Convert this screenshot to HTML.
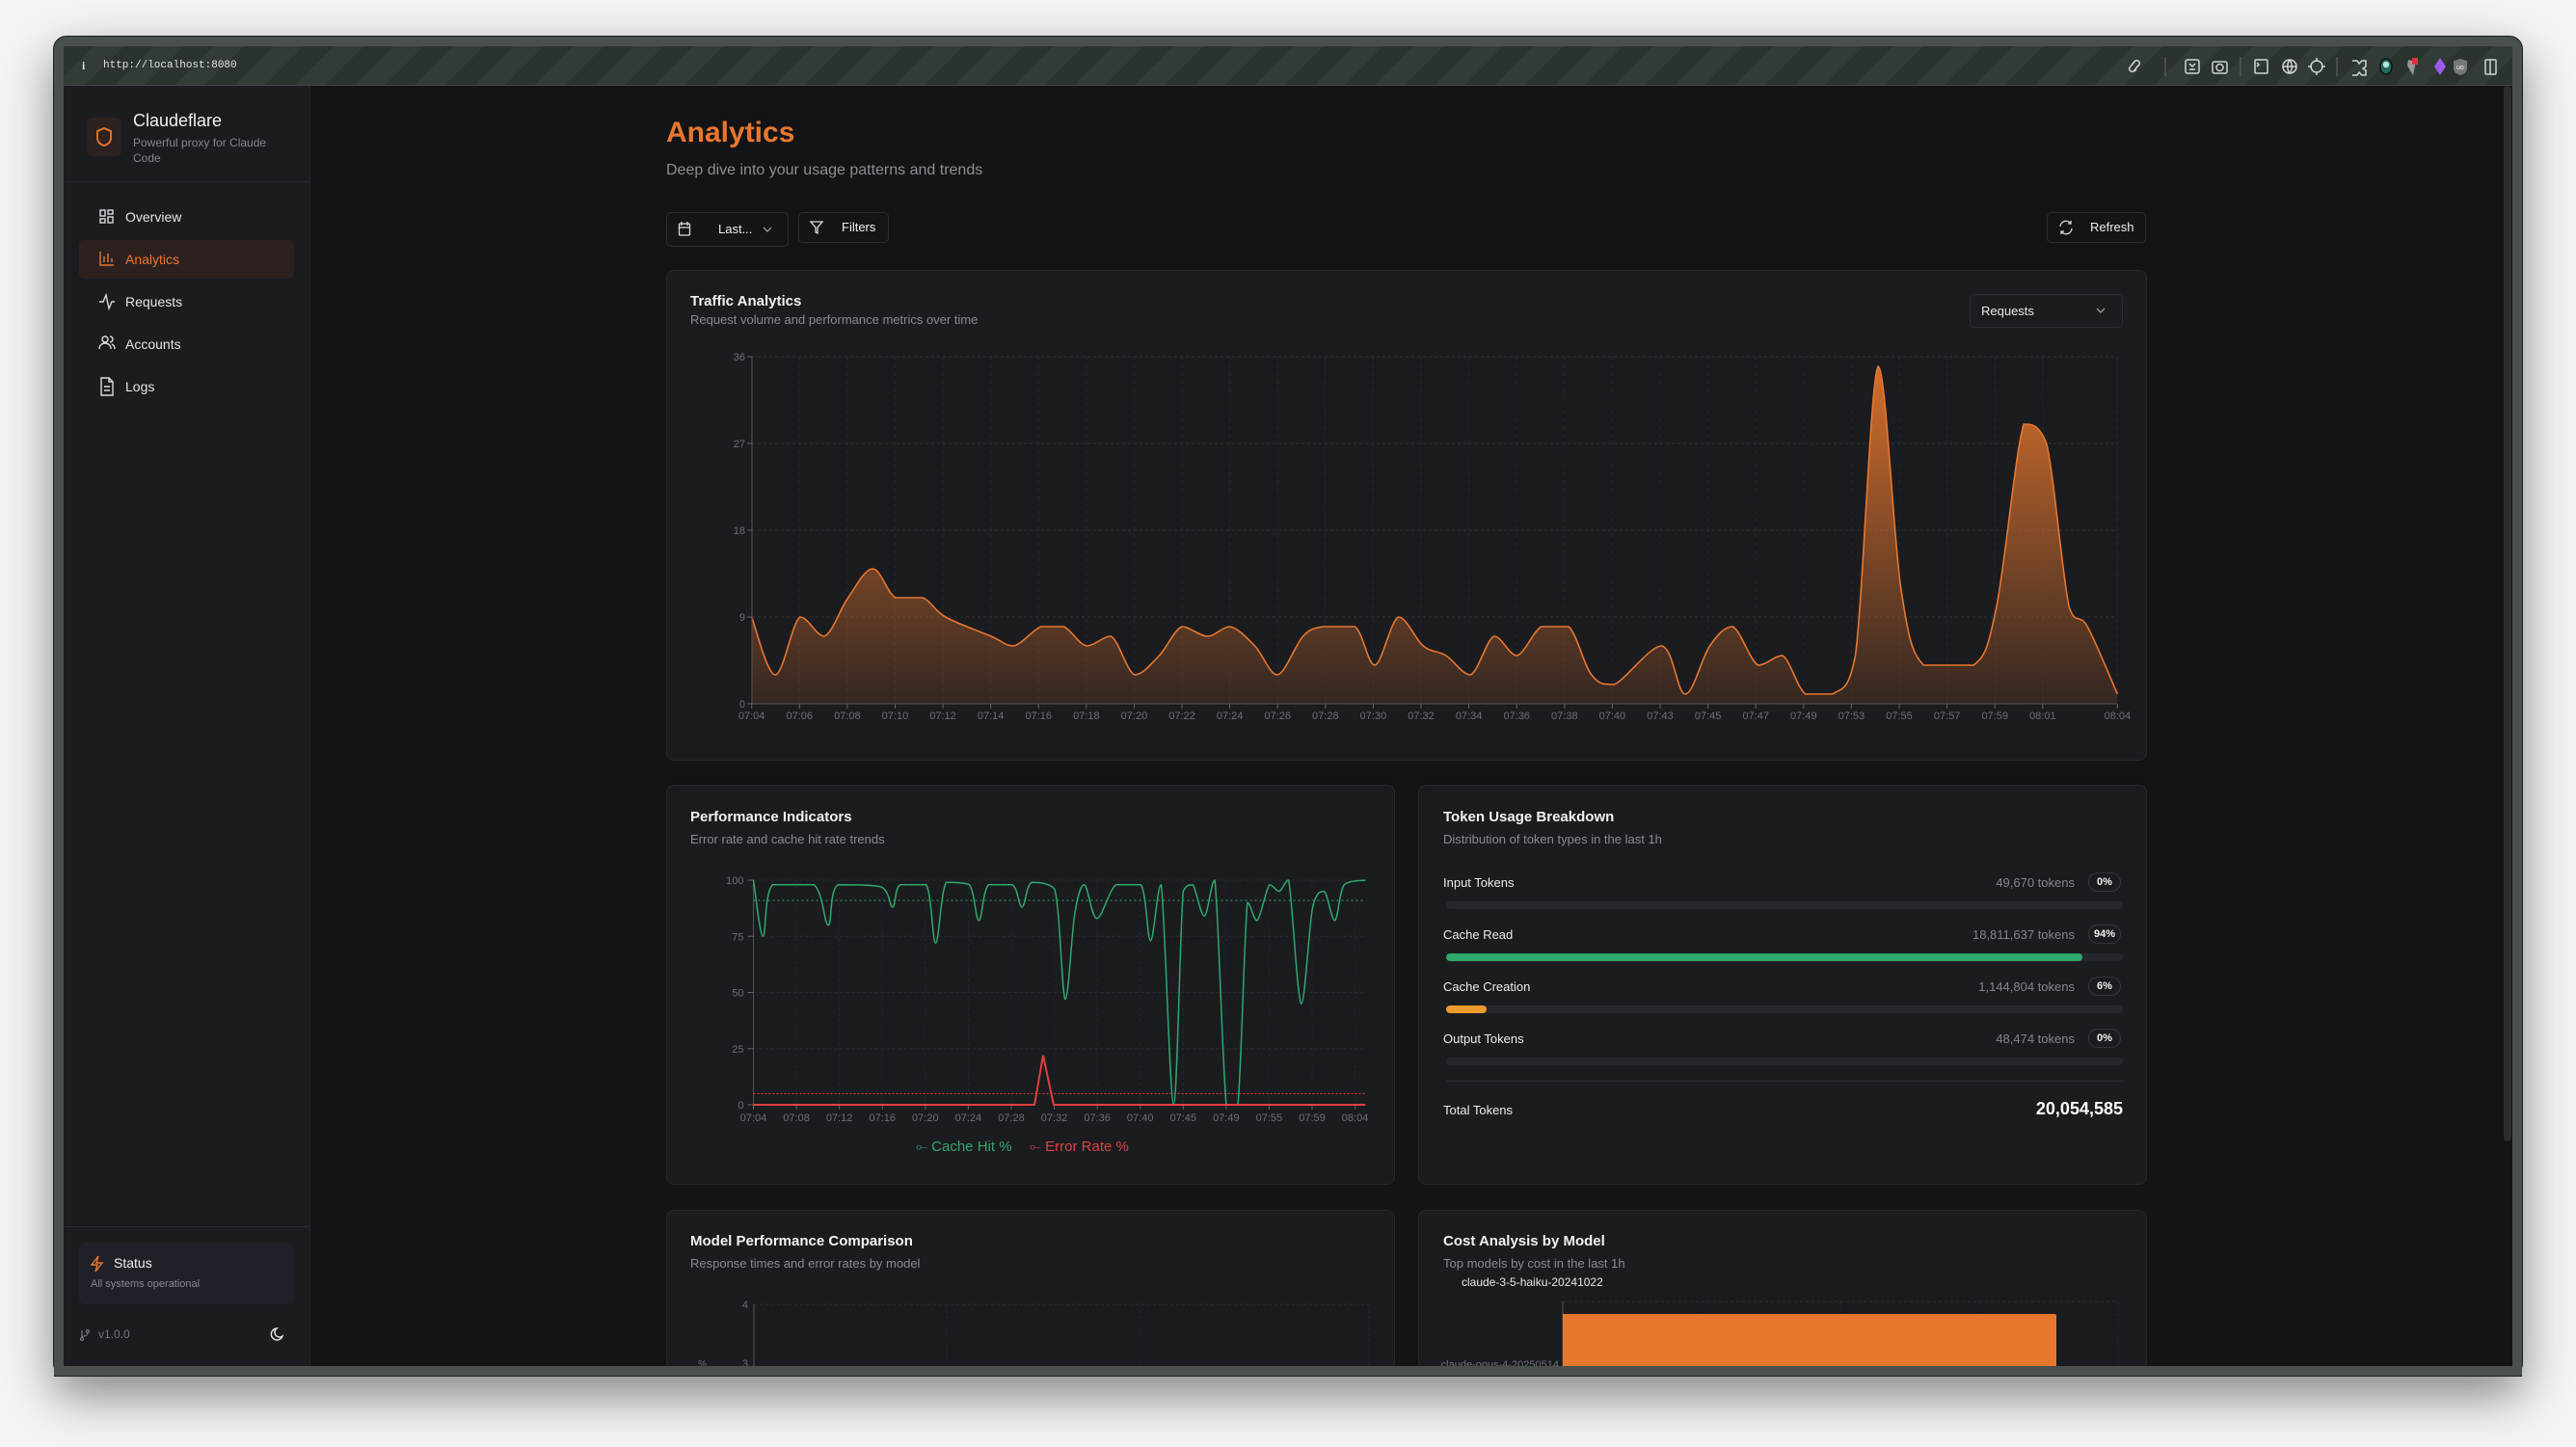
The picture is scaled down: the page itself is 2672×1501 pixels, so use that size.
<!DOCTYPE html>
<html><head><meta charset="utf-8"><style>
*{box-sizing:border-box;margin:0;padding:0}
body{width:2672px;height:1501px;background:#f4f4f4;font-family:"Liberation Sans",sans-serif;position:relative;overflow:hidden}
.abs{position:absolute}
#win{position:absolute;left:55px;top:37px;width:2562px;height:1391px;background:#4a514c;border:1px solid #1d1f1e;border-radius:14px;box-shadow:0 20px 50px rgba(0,0,0,.45);overflow:hidden}
#tb{position:absolute;left:66px;top:48px;width:2540px;height:41px;background:repeating-linear-gradient(135deg,#2b332e 0 22px,#323b35 22px 44px);border-bottom:1px solid #414842}
#side{position:absolute;left:66px;top:89px;width:256px;height:1328px;background:#1b1c20;border-right:1px solid #26272c}
#main{position:absolute;left:322px;top:89px;width:2284px;height:1328px;background:#131416}
.card{position:absolute;background:#1b1c20;border:1px solid #27282d;border-radius:8px}
.t{position:absolute;white-space:nowrap}
.nav{position:absolute;left:130px;font-size:14px;color:#e6e6e8}
.btn{position:absolute;border:1px solid #2c2d33;border-radius:5px;background:#141518;color:#e8e8ea;font-size:13px}
.ct{font-size:15px;color:#f2f2f4;font-weight:bold}
.cs{font-size:13px;color:#8a8b92}
.lbl{font-size:13px;color:#ececee}
.tk{font-size:13px;color:#85868c}
.bar{position:absolute;left:1500px;width:702px;height:8px;background:#26272d;border-radius:4px}
.badge{position:absolute;left:2166px;width:34px;height:20px;border:1px solid #34353b;border-radius:10px;font-size:11px;color:#f2f2f2;font-weight:bold;text-align:center;line-height:18px}
svg text{font-family:"Liberation Sans",sans-serif}
#c1,#c2{z-index:2}
</style></head><body>
<div id="win"></div>
<div id="tb"></div>
<div class="t" style="left:85px;top:61px;font-size:12px;color:#ddd;font-weight:bold;font-family:'Liberation Serif',serif">i</div>
<div class="t" style="left:107px;top:62px;font-size:11px;color:#e4e4e4;font-family:'Liberation Mono',monospace">http://localhost:8080</div>
<svg class="abs" style="left:2200px;top:56px" width="410" height="26" viewBox="0 0 410 26" fill="none" stroke="#d0d4d0" stroke-width="1.5">
<path d="M14 8l-5 6a3 3 0 0 0 4 4l5-6M16 16l-2 2"/><path d="M12 10l3-3a3 3 0 0 1 4 4l-3 3"/>
<line x1="46" y1="3" x2="46" y2="23" stroke="#555"/>
<rect x="67" y="6" width="14" height="14" rx="2"/><path d="M71 10l3 3 3-3M71 16h6"/>
<rect x="95" y="8" width="15" height="12" rx="2"/><circle cx="102.5" cy="14" r="3.5"/>
<line x1="124" y1="3" x2="124" y2="23" stroke="#555"/>
<rect x="139" y="6" width="13" height="14" rx="1"/><path d="M141 9l2 2-2 2"/>
<circle cx="175" cy="13" r="7"/><path d="M168 13h14M175 6c-3 4-3 10 0 14M175 6c3 4 3 10 0 14"/>
<circle cx="203" cy="13" r="6"/><path d="M203 4v4M203 18v4M194 13h4M208 13h4"/>
<line x1="224" y1="3" x2="224" y2="23" stroke="#555"/>
<path d="M240 7h5l2 3 3-3h4v6l-3 2 3 2v5h-4l-3-3-2 3h-5"/>
<ellipse cx="275" cy="13" rx="6" ry="8" fill="#1d6b60" stroke="#111"/><circle cx="275" cy="11" r="2.5" fill="#8fe"/>
<path d="M298 6l8 2-3 14-6-10z" fill="#999" stroke="none"/><rect x="302" y="4" width="6" height="7" fill="#e23040" stroke="none"/>
<path d="M331 4l6 9-6 9-6-9z" fill="#9a5cf0" stroke="none"/>
<path d="M352 5l7 2v8c0 4-3 6-7 7-4-1-7-3-7-7V7z" fill="#777" stroke="none"/><text x="348" y="16" font-size="7" fill="#eee" stroke="none">uo</text>
<rect x="378" y="6" width="11" height="15" rx="1"/><line x1="383" y1="6" x2="383" y2="21"/>
</svg>

<div id="side"></div>
<div class="abs" style="left:90px;top:122px;width:36px;height:40px;background:#2d2220;border-radius:6px"></div>
<svg class="abs" style="left:99px;top:131px" width="18" height="22" viewBox="0 0 18 22" fill="none" stroke="#e8772e" stroke-width="1.8"><path d="M9 2l7 3v7c0 4-3 7-7 8-4-1-7-4-7-8V5z"/></svg>
<div class="t" style="left:138px;top:115px;font-size:18px;color:#f2f2f4">Claudeflare</div>
<div class="t" style="left:138px;top:140px;font-size:12px;color:#85868c;line-height:16px;white-space:normal;width:160px">Powerful proxy for Claude Code</div>
<div class="abs" style="left:66px;top:188px;width:256px;height:1px;background:#2a2b30"></div>
<div class="abs" style="left:82px;top:249px;width:223px;height:40px;background:#2d2120;border-radius:5px"></div>
<svg class="abs" style="left:102px;top:216px" width="18" height="200" viewBox="0 0 18 200" fill="none" stroke="#dcdce0" stroke-width="1.4">
<rect x="2" y="2" width="5" height="6"/><rect x="10" y="2" width="5" height="4"/><rect x="2" y="11" width="5" height="4"/><rect x="10" y="9" width="5" height="6"/>
<g stroke="#e8772e"><path d="M2 45v14h14M6 56v-6M10 56v-9M14 56v-4"/></g>
<path d="M1 97h4l3-7 3 14 3-7h3"/>
<circle cx="7" cy="136" r="3"/><path d="M1 146c0-4 3-6 6-6s6 2 6 6M12 133a3 3 0 0 1 0 6M14 141c2 1 3 3 3 5"/>
<path d="M3 176h8l4 4v14H3z M11 176v4h4 M6 185h6M6 189h6"/>
</svg>
<div class="nav" style="top:217px">Overview</div>
<div class="nav" style="top:261px;color:#e8772e">Analytics</div>
<div class="nav" style="top:305px">Requests</div>
<div class="nav" style="top:349px">Accounts</div>
<div class="nav" style="top:393px">Logs</div>

<div class="abs" style="left:66px;top:1272px;width:256px;height:1px;background:#2a2b30"></div>
<div class="abs" style="left:82px;top:1289px;width:223px;height:64px;background:#202128;border-radius:6px"></div>
<svg class="abs" style="left:93px;top:1302px" width="16" height="18" viewBox="0 0 16 18" fill="none" stroke="#e8772e" stroke-width="1.4"><path d="M9 1L2 10h6l-2 7 7-9H7z"/></svg>
<div class="t" style="left:118px;top:1302px;font-size:14px;color:#f0f0f2">Status</div>
<div class="t" style="left:94px;top:1326px;font-size:11px;color:#8a8b92">All systems operational</div>
<svg class="abs" style="left:82px;top:1378px" width="12" height="14" viewBox="0 0 12 14" fill="none" stroke="#77787e" stroke-width="1.2"><circle cx="3" cy="11" r="1.5"/><circle cx="9" cy="3" r="1.5"/><path d="M3 2v7M9 5c0 3-6 3-6 4"/></svg>
<div class="t" style="left:102px;top:1377px;font-size:12px;color:#77787e">v1.0.0</div>
<svg class="abs" style="left:279px;top:1376px" width="16" height="16" viewBox="0 0 16 16" fill="none" stroke="#e6e6e6" stroke-width="1.4"><path d="M8 2a6 6 0 1 0 6 8A5 5 0 0 1 8 2z"/></svg>

<div id="main"></div>
<div class="abs" style="left:2597px;top:89px;width:8px;height:1095px;background:#2a2c2f;border-radius:4px"></div>
<div class="t" style="left:691px;top:121px;font-size:30px;color:#e8772e;font-weight:bold">Analytics</div>
<div class="t" style="left:691px;top:168px;font-size:16px;color:#8d8e95">Deep dive into your usage patterns and trends</div>

<div class="btn" style="left:691px;top:220px;width:127px;height:36px"></div>
<svg class="abs" style="left:703px;top:229px" width="14" height="16" viewBox="0 0 14 16" fill="none" stroke="#ddd" stroke-width="1.3"><rect x="1.5" y="3" width="11" height="12" rx="1"/><path d="M1.5 7h11M4 1v4M10 1v4"/></svg>
<div class="t" style="left:745px;top:230px;font-size:13px;color:#eee">Last...</div>
<svg class="abs" style="left:791px;top:234px" width="10" height="8" viewBox="0 0 10 8" fill="none" stroke="#aaa" stroke-width="1.2"><path d="M1 2l4 4 4-4"/></svg>
<div class="btn" style="left:828px;top:220px;width:94px;height:32px"></div>
<svg class="abs" style="left:840px;top:228px" width="14" height="16" viewBox="0 0 14 16" fill="none" stroke="#ddd" stroke-width="1.3"><path d="M1 2h12L8 8v6L6 13V8z"/></svg>
<div class="t" style="left:873px;top:228px;font-size:13px;color:#eee">Filters</div>
<div class="btn" style="left:2123px;top:220px;width:103px;height:32px"></div>
<svg class="abs" style="left:2135px;top:228px" width="16" height="16" viewBox="0 0 16 16" fill="none" stroke="#ddd" stroke-width="1.3"><path d="M2 7a6 6 0 0 1 11-3M14 9a6 6 0 0 1-11 3M13 1v3h-3M3 15v-3h3"/></svg>
<div class="t" style="left:2168px;top:228px;font-size:13px;color:#eee">Refresh</div>

<div class="card" style="left:691px;top:280px;width:1536px;height:509px"></div>
<div class="t ct" style="left:716px;top:304px">Traffic Analytics</div>
<div class="t cs" style="left:716px;top:324px">Request volume and performance metrics over time</div>
<div class="btn" style="left:2043px;top:305px;width:159px;height:35px;background:#1b1c20"></div>
<div class="t" style="left:2055px;top:315px;font-size:13px;color:#e8e8ea">Requests</div>
<svg class="abs" style="left:2174px;top:318px" width="10" height="8" viewBox="0 0 10 8" fill="none" stroke="#aaa" stroke-width="1.2"><path d="M1 2l4 4 4-4"/></svg>

<div class="card" style="left:691px;top:814px;width:756px;height:415px"></div>
<div class="t ct" style="left:716px;top:839px">Performance Indicators</div>
<div class="t cs" style="left:716px;top:863px">Error rate and cache hit rate trends</div>

<div class="card" style="left:1471px;top:814px;width:756px;height:415px"></div>
<div class="t ct" style="left:1497px;top:839px">Token Usage Breakdown</div>
<div class="t cs" style="left:1497px;top:863px">Distribution of token types in the last 1h</div>
<div class="t lbl" style="left:1497px;top:908px">Input Tokens</div>
<div class="t tk" style="right:520px;top:908px">49,670 tokens</div><div class="badge" style="top:905px">0%</div>
<div class="bar" style="top:935px"></div>
<div class="t lbl" style="left:1497px;top:962px">Cache Read</div>
<div class="t tk" style="right:520px;top:962px">18,811,637 tokens</div><div class="badge" style="top:959px">94%</div>
<div class="bar" style="top:989px"></div><div class="bar" style="top:989px;width:660px;background:#2fa96a"></div>
<div class="t lbl" style="left:1497px;top:1016px">Cache Creation</div>
<div class="t tk" style="right:520px;top:1016px">1,144,804 tokens</div><div class="badge" style="top:1013px">6%</div>
<div class="bar" style="top:1043px"></div><div class="bar" style="top:1043px;width:42px;background:#ee9a2c"></div>
<div class="t lbl" style="left:1497px;top:1070px">Output Tokens</div>
<div class="t tk" style="right:520px;top:1070px">48,474 tokens</div><div class="badge" style="top:1067px">0%</div>
<div class="bar" style="top:1097px"></div>
<div class="abs" style="left:1500px;top:1121px;width:702px;height:1px;background:#2c2d33"></div>
<div class="t lbl" style="left:1497px;top:1144px">Total Tokens</div>
<div class="t" style="right:470px;top:1140px;font-size:18px;color:#fff;font-weight:bold">20,054,585</div>

<div class="card" style="left:691px;top:1255px;width:756px;height:170px"></div>
<div class="t ct" style="left:716px;top:1279px">Model Performance Comparison</div>
<div class="t cs" style="left:716px;top:1303px">Response times and error rates by model</div>
<div class="card" style="left:1471px;top:1255px;width:756px;height:170px"></div>
<div class="t ct" style="left:1497px;top:1279px">Cost Analysis by Model</div>
<div class="t cs" style="left:1497px;top:1303px">Top models by cost in the last 1h</div>
<div class="t" style="left:1516px;top:1323px;font-size:12px;color:#e8e8ea">claude-3-5-haiku-20241022</div>

<svg id="c1" class="abs" style="left:0;top:0" width="2672" height="1501"></svg>
<svg id="c2" class="abs" style="left:0;top:0" width="2672" height="1501"></svg>
<div class="abs" style="left:56px;top:1417px;width:2560px;height:11px;background:#4a514c;border-bottom:1px solid #222;z-index:3"></div>

<script>
function smooth(p,clamp){let d="M"+p[0][0]+" "+p[0][1];for(let i=0;i<p.length-1;i++){const p0=p[i-1]||p[i],p1=p[i],p2=p[i+1],p3=p[i+2]||p2;let c1x=p1[0]+(p2[0]-p0[0])/6,c1y=p1[1]+(p2[1]-p0[1])/6,c2x=p2[0]-(p3[0]-p1[0])/6,c2y=p2[1]-(p3[1]-p1[1])/6;if(clamp){const lo=Math.min(p1[1],p2[1]),hi=Math.max(p1[1],p2[1]);c1y=Math.max(lo,Math.min(hi,c1y));c2y=Math.max(lo,Math.min(hi,c2y));}d+=`C${c1x.toFixed(1)} ${c1y.toFixed(1)} ${c2x.toFixed(1)} ${c2y.toFixed(1)} ${p2[0].toFixed(1)} ${p2[1].toFixed(1)}`;}return d;}
const NS="http://www.w3.org/2000/svg";
function add(svg,tag,attrs,txt){const e=document.createElementNS(NS,tag);for(const k in attrs)e.setAttribute(k,attrs[k]);if(txt!=null)e.textContent=txt;svg.appendChild(e);return e;}
const s1=document.getElementById('c1');
const defs=add(s1,'defs',{});const g=add(defs,'linearGradient',{id:'og',x1:0,y1:0,x2:0,y2:1});add(g,'stop',{offset:'0','stop-color':'#e8772e','stop-opacity':'0.9'});add(g,'stop',{offset:'1','stop-color':'#e8772e','stop-opacity':'0.12'});
const X0=780,X1=2196,Y0=730;
[36,27,18,9].forEach(v=>{const y=Y0-v*10;add(s1,'line',{x1:X0,x2:X1,y1:y,y2:y,stroke:'#2e2f35','stroke-dasharray':'3 3'});});
const labs=["07:04","07:06","07:08","07:10","07:12","07:14","07:16","07:18","07:20","07:22","07:24","07:26","07:28","07:30","07:32","07:34","07:36","07:38","07:40","07:43","07:45","07:47","07:49","07:53","07:55","07:57","07:59","08:01","08:04"];
labs.forEach((l,i)=>{const zx=i<28?42+i*52.55:1543;const x=740+zx/1.0595;add(s1,'line',{x1:x,x2:x,y1:370,y2:730,stroke:'#26272d','stroke-dasharray':'4 4'});add(s1,'line',{x1:x,x2:x,y1:730,y2:735,stroke:'#666'});add(s1,'text',{x:x,y:746,'font-size':11,fill:'#6e6f76','text-anchor':'middle'},l);});
[[36,'36'],[27,'27'],[18,'18'],[9,'9'],[0,'0']].forEach(([v,t])=>{add(s1,'text',{x:773,y:Y0-v*10+4,'font-size':11,fill:'#6e6f76','text-anchor':'end'},t);add(s1,'line',{x1:775,x2:780,y1:Y0-v*10,y2:Y0-v*10,stroke:'#666'});});
const td=[[42,9],[68,3],[95,9],[122,7],[148,11],[175,14],[200,11],[230,11],[255,9],[305,7],[330,6],[360,8],[385,8],[410,6],[437,7],[463,3],[490,5],[515,8],[543,7],[568,8],[595,6],[620,3],[648,7],[670,8],[705,8],[727,4],[753,9],[780,6],[805,5],[832,3],[858,7],[883,5],[910,8],[940,8],[965,3],[990,2],[1042,6],[1068,1],[1095,6],[1120,8],[1148,4],[1175,5],[1200,1],[1230,1],[1255,5],[1280,35],[1305,12],[1330,4],[1385,4],[1410,10],[1440,29],[1465,27],[1490,10],[1510,8],[1543,1]].map(([zx,v])=>[740+zx/1.0595,Y0-v*10]);
const d1=smooth(td,true);
add(s1,'path',{d:d1+`L${X1} ${Y0}L${X0} ${Y0}Z`,fill:'url(#og)'});
add(s1,'path',{d:d1,fill:'none',stroke:'#e8772e','stroke-width':1.6});
add(s1,'line',{x1:X0,x2:X0,y1:370,y2:730,stroke:'#555'});add(s1,'line',{x1:X0,x2:X1,y1:730,y2:730,stroke:'#555'});
const PX=x=>680+x/1.005, PY=v=>1146-v*2.33;
[100,75,50,25].forEach(v=>add(s1,'line',{x1:PX(102),x2:PX(740),y1:PY(v),y2:PY(v),stroke:'#2a2b31','stroke-dasharray':'3 3'}));
const pl=["07:04","07:08","07:12","07:16","07:20","07:24","07:28","07:32","07:36","07:40","07:45","07:49","07:55","07:59","08:04"];
pl.forEach((l,i)=>{const x=PX(102+i*44.8);add(s1,'line',{x1:x,x2:x,y1:PY(100),y2:PY(0),stroke:'#25262c','stroke-dasharray':'3 3'});add(s1,'line',{x1:x,x2:x,y1:PY(0),y2:PY(0)+5,stroke:'#666'});add(s1,'text',{x:x,y:1163,'font-size':11,fill:'#6e6f76','text-anchor':'middle'},l);});
[100,75,50,25,0].forEach(v=>{add(s1,'text',{x:PX(92),y:PY(v)+4,'font-size':11,fill:'#6e6f76','text-anchor':'end'},String(v));add(s1,'line',{x1:PX(96),x2:PX(102),y1:PY(v),y2:PY(v),stroke:'#666'});});
add(s1,'line',{x1:PX(102),x2:PX(102),y1:PY(100),y2:PY(0),stroke:'#555'});
add(s1,'line',{x1:PX(102),x2:PX(740),y1:PY(91),y2:PY(91),stroke:'#2fa96a','stroke-dasharray':'2 3'});
add(s1,'line',{x1:PX(102),x2:PX(740),y1:PY(5),y2:PY(5),stroke:'#e04040','stroke-dasharray':'2 2'});
const ch=[[102,100],[112,75],[122,98],[165,98],[180,80],[190,98],[235,97],[247,88],[255,98],[282,98],[292,72],[303,99],[327,98],[337,82],[347,98],[372,98],[382,88],[392,99],[416,96],[427,47],[437,85],[447,98],[460,83],[480,98],[506,98],[516,73],[527,98],[540,0],[550,95],[560,98],[572,84],[583,100],[595,0],[607,0],[617,90],[627,82],[640,98],[650,95],[660,100],[673,45],[685,88],[697,95],[708,82],[718,98],[740,100]].map(([x,v])=>[PX(x),PY(v)]);
add(s1,'path',{d:smooth(ch,true),fill:'none',stroke:'#2fa96a','stroke-width':1.5});
add(s1,'path',{d:`M${PX(102)} ${PY(0)}L${PX(395)} ${PY(0)}L${PX(404)} ${PY(22)}L${PX(415)} ${PY(0)}L${PX(740)} ${PY(0)}`,fill:'none',stroke:'#e04040','stroke-width':2});
add(s1,'text',{x:950,y:1194,'font-size':15,fill:'#2fa96a'},'⟜ Cache Hit %');
add(s1,'text',{x:1068,y:1194,'font-size':15,fill:'#e04040'},'⟜ Error Rate %');
const s2=document.getElementById('c2');
add(s2,'line',{x1:782,x2:1420,y1:1353,y2:1353,stroke:'#2a2b31','stroke-dasharray':'3 3'});
[782,982,1182,1420].forEach(x=>add(s2,'line',{x1:x,x2:x,y1:1353,y2:1417,stroke:'#25262c','stroke-dasharray':'3 3'}));
add(s2,'line',{x1:782,x2:782,y1:1353,y2:1417,stroke:'#555'});
add(s2,'text',{x:776,y:1357,'font-size':11,fill:'#6e6f76','text-anchor':'end'},'4');
add(s2,'text',{x:776,y:1418,'font-size':11,fill:'#6e6f76','text-anchor':'end'},'3');
add(s2,'text',{x:724,y:1418,'font-size':10,fill:'#6e6f76'},'%');
add(s2,'line',{x1:1621,x2:2197,y1:1350,y2:1350,stroke:'#2a2b31','stroke-dasharray':'3 3'});
[1765,1909,2053,2197].forEach(x=>add(s2,'line',{x1:x,x2:x,y1:1350,y2:1417,stroke:'#25262c','stroke-dasharray':'3 3'}));
add(s2,'line',{x1:1621,x2:1621,y1:1350,y2:1417,stroke:'#555'});
add(s2,'path',{d:'M1621 1363H2131a2 2 0 0 1 2 2V1417H1621Z',fill:'#e8772e'});
add(s2,'text',{x:1617,y:1419,'font-size':11,fill:'#6e6f76','text-anchor':'end'},'claude-opus-4-20250514');
</script>
</body></html>
